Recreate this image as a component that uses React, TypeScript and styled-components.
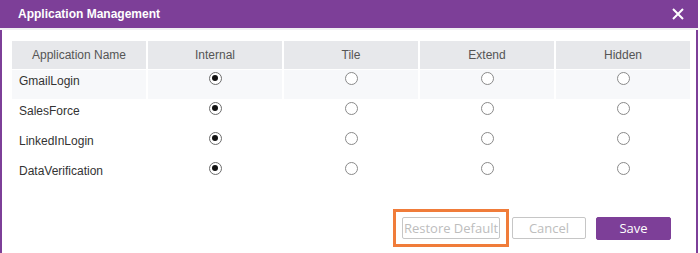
import styled, { createGlobalStyle } from 'styled-components';

const GlobalStyle = createGlobalStyle`
	html, body {
		margin: 0;
		padding: 0;
		background: #ffffff;
	}
	body {
		font-family: 'Liberation Sans', Arial, sans-serif;
	}
`;

const PURPLE = '#7d3f98';

const Dialog = styled.div`
	box-sizing: border-box;
	width: 698px;
	height: 253px;
	border-left: 2px solid ${PURPLE};
	border-right: 2px solid ${PURPLE};
	display: flex;
	flex-direction: column;
	background: #ffffff;
`;

const TitleBar = styled.div`
	height: 28px;
	margin: 0 -2px;
	padding: 0 12px 0 18px;
	background: ${PURPLE};
	border-bottom: 2px solid #f0f0f2;
	display: flex;
	align-items: center;
	justify-content: space-between;
`;

const Title = styled.h1`
	margin: 0;
	color: #ffffff;
	font-size: 12px;
	font-weight: bold;
`;

const CloseButton = styled.button`
	width: 16px;
	height: 16px;
	padding: 0;
	border: none;
	background: none;
	display: flex;
	align-items: center;
	justify-content: center;
	cursor: pointer;
`;

const Body = styled.div`
	padding: 11px 6px 0 10px;
`;

const Table = styled.div`
	display: flex;
	flex-direction: column;
	gap: 1px;
`;

const Row = styled.div<{ $head?: boolean; $shade?: boolean }>`
	display: grid;
	grid-template-columns: repeat(5, 134px);
	column-gap: 2px;
	height: ${(p) => (p.$head ? '28px' : '29px')};
	& > div {
		background: ${(p) => (p.$head ? '#e7e8eb' : p.$shade ? '#f7f8fa' : '#ffffff')};
		padding-bottom: ${(p) => (p.$head ? '0' : '8px')};
		color: ${(p) => (p.$head ? '#555555' : '#333333')};
	}
`;

const Cell = styled.div<{ $left?: boolean }>`
	display: flex;
	align-items: center;
	justify-content: ${(p) => (p.$left ? 'flex-start' : 'center')};
	padding-left: ${(p) => (p.$left ? '7px' : '0')};
	font-size: 12px;
`;

const Radio = styled.span<{ $checked?: boolean }>`
	box-sizing: border-box;
	width: 13px;
	height: 13px;
	margin-bottom: 5px;
	border-radius: 50%;
	border: 1px solid ${(p) => (p.$checked ? '#6d6d6d' : '#8a8a8a')};
	background: #ffffff;
	display: flex;
	align-items: center;
	justify-content: center;
	&::after {
		content: '';
		display: ${(p) => (p.$checked ? 'block' : 'none')};
		width: 6px;
		height: 6px;
		border-radius: 50%;
		background: #111111;
	}
`;

const Footer = styled.div`
	display: flex;
	align-items: center;
	justify-content: flex-end;
	padding: 20px 25px 0 0;
`;

const Highlight = styled.div`
	border: 3px solid #f07c3a;
	padding: 5px 6px;
	margin-right: 3px;
	display: flex;
`;

const Button = styled.button<{ $primary?: boolean }>`
	box-sizing: border-box;
	height: ${(p) => (p.$primary ? '23px' : '22px')};
	padding: 0;
	border: 1px solid ${(p) => (p.$primary ? PURPLE : '#c6c6c6')};
	border-radius: 2px;
	background: ${(p) => (p.$primary ? PURPLE : '#ffffff')};
	color: ${(p) => (p.$primary ? '#ffffff' : '#bdbdbd')};
	font-family: 'Open Sans', 'Noto Sans', sans-serif;
	font-size: 13px;
	cursor: pointer;
`;

const RestoreButton = styled(Button)`
	width: 98px;
`;

const CancelButton = styled(Button)`
	width: 74px;
	margin-right: 10px;
`;

const SaveButton = styled(Button)`
	width: 75px;
`;

const columns = ['Application Name', 'Internal', 'Tile', 'Extend', 'Hidden'];

const apps = [
	{ name: 'GmailLogin', mode: 0 },
	{ name: 'SalesForce', mode: 0 },
	{ name: 'LinkedInLogin', mode: 0 },
	{ name: 'DataVerification', mode: 0 },
];

const App = () => {
	return (
		<>
			<GlobalStyle />
			<Dialog>
				<TitleBar>
					<Title>Application Management</Title>
					<CloseButton aria-label="Close">
						<svg width="12" height="12" viewBox="0 0 12 12">
							<path d="M1 1 L11 11 M11 1 L1 11" stroke="#ffffff" strokeWidth="2" />
						</svg>
					</CloseButton>
				</TitleBar>
				<Body>
					<Table>
						<Row $head>
							{columns.map((col) => (
								<Cell key={col}>{col}</Cell>
							))}
						</Row>
						{apps.map((app, i) => (
							<Row key={app.name} $shade={i === 0}>
								<Cell $left>{app.name}</Cell>
								{[0, 1, 2, 3].map((m) => (
									<Cell key={m}>
										<Radio $checked={app.mode === m} />
									</Cell>
								))}
							</Row>
						))}
					</Table>
				</Body>
				<Footer>
					<Highlight>
						<RestoreButton>Restore Default</RestoreButton>
					</Highlight>
					<CancelButton>Cancel</CancelButton>
					<SaveButton $primary>Save</SaveButton>
				</Footer>
			</Dialog>
		</>
	);
};

export default App;
